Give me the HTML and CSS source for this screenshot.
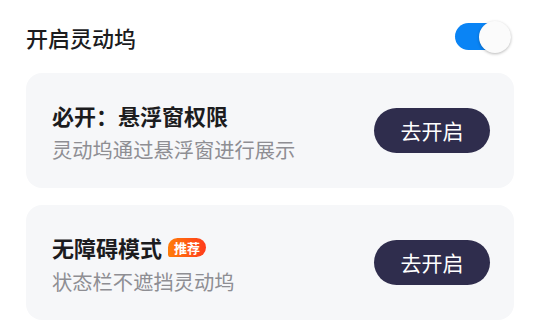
FILE: index.html
```html
<!DOCTYPE html>
<html lang="zh-CN">
<head>
<meta charset="utf-8">
<link rel="stylesheet" href="styles.css">
</head>
<body>
<div class="page">
  <div class="header">
    <div class="main-title">开启灵动坞</div>
    <div class="switch"><div class="knob"></div></div>
  </div>
  <div class="card">
    <div class="text">
      <div class="title">必开：悬浮窗权限</div>
      <div class="sub">灵动坞通过悬浮窗进行展示</div>
    </div>
    <div class="btn">去开启</div>
  </div>
  <div class="card">
    <div class="text">
      <div class="title">无障碍模式<span class="badge">推荐</span></div>
      <div class="sub">状态栏不遮挡灵动坞</div>
    </div>
    <div class="btn">去开启</div>
  </div>
</div>
</body>
</html>
```
FILE: styles.css
```css
html, body {
  margin: 0;
  padding: 0;
  background: #ffffff;
}
body {
  font-family: "Noto Sans CJK SC", "Noto Sans", sans-serif;
  width: 540px;
  height: 333px;
  overflow: hidden;
}
.page {
  padding: 0 26px;
  display: flex;
  flex-direction: column;
  gap: 17px;
}
.header {
  height: 73px;
  margin-bottom: -17px;
  display: flex;
  align-items: center;
  justify-content: space-between;
}
.main-title {
  font-size: 22px;
  font-weight: 500;
  color: #1c1c1e;
  line-height: 30px;
}
.switch {
  position: relative;
  width: 54px;
  height: 27px;
  border-radius: 14px;
  background: #0a84f5;
  margin-right: 5px;
}
.knob {
  position: absolute;
  right: -2px;
  top: -2px;
  width: 32px;
  height: 32px;
  border-radius: 50%;
  background: #fbfbfb;
  box-shadow: 0 1px 3px rgba(0,0,0,0.28);
}
.card {
  height: 115px;
  border-radius: 16px;
  background: #f6f7f9;
  display: flex;
  align-items: center;
  justify-content: space-between;
  padding: 0 24px 0 26px;
}
.text {
  display: flex;
  flex-direction: column;
  gap: 5px;
  padding-top: 2px;
}
.title {
  font-size: 22px;
  font-weight: 700;
  color: #1c1c1e;
  line-height: 30px;
  display: flex;
  align-items: center;
}
.sub {
  font-size: 20.3px;
  color: #8e8e93;
  line-height: 28px;
}
.badge {
  margin-left: 6px;
  width: 38px;
  height: 19px;
  border-radius: 10px 10px 10px 3px;
  background: linear-gradient(90deg, #ff7d0a, #ff3b1c);
  color: #fff;
  font-size: 13px;
  font-weight: 700;
  line-height: 19px;
  text-align: center;
}
.btn {
  width: 116px;
  height: 45px;
  border-radius: 23px;
  background: #2f2d4d;
  color: #ffffff;
  font-size: 21px;
  line-height: 45px;
  text-align: center;
}
```
